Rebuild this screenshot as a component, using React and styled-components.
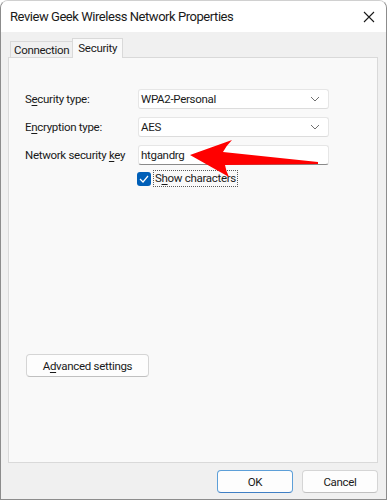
import React from 'react';
import styled, { createGlobalStyle } from 'styled-components';

const GlobalStyle = createGlobalStyle`
  html, body {
    margin: 0;
    padding: 0;
    background: #ffffff;
  }
  * {
    box-sizing: border-box;
  }
`;

const Window = styled('div')`
  position: relative;
  width: 387px;
  height: 500px;
  display: flex;
  flex-direction: column;
  background: #f0f0f0;
  border: 1px solid #8c8c8c;
  border-top-color: #d0d0d0;
  border-radius: 8px 8px 0 0;
  overflow: hidden;
  font-family: Roboto, "Noto Sans", sans-serif;
  color: #1a1a1a;
  letter-spacing: -0.3px;
`;

const TitleBar = styled('div')`
  height: 31px;
  flex: none;
  display: flex;
  align-items: center;
  justify-content: space-between;
  padding: 0 10px 0 9px;
  background: #ffffff;
  font-size: 13px;
  letter-spacing: -0.45px;
`;

const CloseButton = styled('div')`
  width: 14px;
  height: 14px;
  display: flex;
  align-items: center;
  justify-content: center;
`;

const Body = styled('div')`
  flex: 1;
  display: flex;
  flex-direction: column;
  padding: 6px 8px 0 7px;
`;

const TabStrip = styled('div')`
  display: flex;
  align-items: flex-end;
  height: 20px;
  padding-left: 2px;
  position: relative;
  z-index: 1;
  margin-bottom: -1px;
`;

const Tab = styled('div')`
  height: ${p => (p.$active ? '20px' : '17px')};
  padding: 0 ${p => (p.$active ? '5px' : '3px')};
  display: flex;
  align-items: center;
  font-size: 11.5px;
  background: ${p => (p.$active ? '#f9f9f9' : '#f0f0f0')};
  border: 1px solid #d9d9d9;
  border-bottom: ${p => (p.$active ? 'none' : '1px solid #d9d9d9')};
  margin-left: ${p => (p.$active ? '-1px' : '0')};
  padding-bottom: ${p => (p.$active ? '2px' : '0')};
`;

const Panel = styled('div')`
  height: 406px;
  background: #f9f9f9;
  border: 1px solid #d9d9d9;
  display: flex;
  flex-direction: column;
  padding: 31px 0 0 16px;
`;

const FormGrid = styled('div')`
  display: grid;
  grid-template-columns: 113px 191px;
  grid-auto-rows: 19px;
  row-gap: 9px;
  align-items: center;
  font-size: 11.5px;
`;

const Label = styled('span')`
  white-space: nowrap;
  padding-top: 1px;
`;

const Key = styled('span')`
  text-decoration: underline;
  text-underline-offset: 2px;
`;

const Field = styled('div')`
  height: 20px;
  display: flex;
  align-items: center;
  justify-content: space-between;
  padding: 0 8px 0 2px;
  background: #ffffff;
  border: 1px solid #e6e6e6;
  border-bottom-color: ${p => (p.$input ? '#8a8a8a' : '#dcdcdc')};
  border-radius: 3px;
  font-size: 11.5px;
`;

const CheckRow = styled('div')`
  display: flex;
  align-items: center;
  gap: 2px;
  margin: 6px 0 0 112px;
  font-size: 11.5px;
`;

const CheckBox = styled('div')`
  width: 14px;
  height: 14px;
  border-radius: 3px;
  background: #005fb8;
  display: flex;
  align-items: center;
  justify-content: center;
`;

const FocusLabel = styled('span')`
  border: 1px dotted #5a5a5a;
  padding: 0 1px;
  line-height: 15px;
`;

const Spacer = styled('div')`
  flex: 1;
`;

const Button = styled('div')`
  width: ${p => p.$w || 76}px;
  height: 23px;
  display: flex;
  align-items: center;
  justify-content: center;
  background: #fdfdfd;
  border: 1px solid ${p => (p.$primary ? '#5d9fd8' : '#d5d5d5')};
  border-bottom-color: ${p => (p.$primary ? '#3f7fc4' : '#c0c0c0')};
  border-radius: 4px;
  font-size: 11.5px;
`;

const AdvancedWrap = styled('div')`
  margin: 0 0 85px 1px;
`;

const Footer = styled('div')`
  display: flex;
  justify-content: flex-end;
  gap: 9px;
  padding: 7px 0 0;
`;

const Arrow = styled('svg')`
  position: absolute;
  left: 0;
  top: 0;
  pointer-events: none;
`;

const Chevron = () => (
  <svg width="10" height="6" viewBox="0 0 10 6">
    <path d="M1 1 L5 5 L9 1" fill="none" stroke="#707070" strokeWidth="1" />
  </svg>
);

const App = () => (
  <>
    <GlobalStyle />
    <Window>
      <TitleBar>
        <span>Review Geek Wireless Network Properties</span>
        <CloseButton>
          <svg width="12" height="12" viewBox="0 0 12 12">
            <path d="M1 1 L11 11 M11 1 L1 11" stroke="#1a1a1a" strokeWidth="1.1" />
          </svg>
        </CloseButton>
      </TitleBar>
      <Body>
        <TabStrip>
          <Tab>Connection</Tab>
          <Tab $active>Security</Tab>
        </TabStrip>
        <Panel>
          <FormGrid>
            <Label>S<Key>e</Key>curity type:</Label>
            <Field>WPA2-Personal<Chevron /></Field>
            <Label>E<Key>n</Key>cryption type:</Label>
            <Field>AES<Chevron /></Field>
            <Label>Network security <Key>k</Key>ey</Label>
            <Field $input>htgandrg</Field>
          </FormGrid>
          <CheckRow>
            <CheckBox>
              <svg width="10" height="8" viewBox="0 0 10 8">
                <path d="M1 4 L4 7 L9 1" fill="none" stroke="#ffffff" strokeWidth="1.2" />
              </svg>
            </CheckBox>
            <FocusLabel>S<Key>h</Key>ow characters</FocusLabel>
          </CheckRow>
          <Spacer />
          <AdvancedWrap>
            <Button $w={123}>A<Key>d</Key>vanced settings</Button>
          </AdvancedWrap>
        </Panel>
        <Footer>
          <Button $primary>OK</Button>
          <Button>Cancel</Button>
        </Footer>
      </Body>
      <Arrow width="387" height="500" viewBox="0 0 387 500">
        <path
          d="M189 154 L231 139 Q225 145 222 151 L317 161 L317 163 L224 164 Q225 170 228 176 Z"
          fill="#ff0000"
        />
      </Arrow>
    </Window>
  </>
);

export default App;
